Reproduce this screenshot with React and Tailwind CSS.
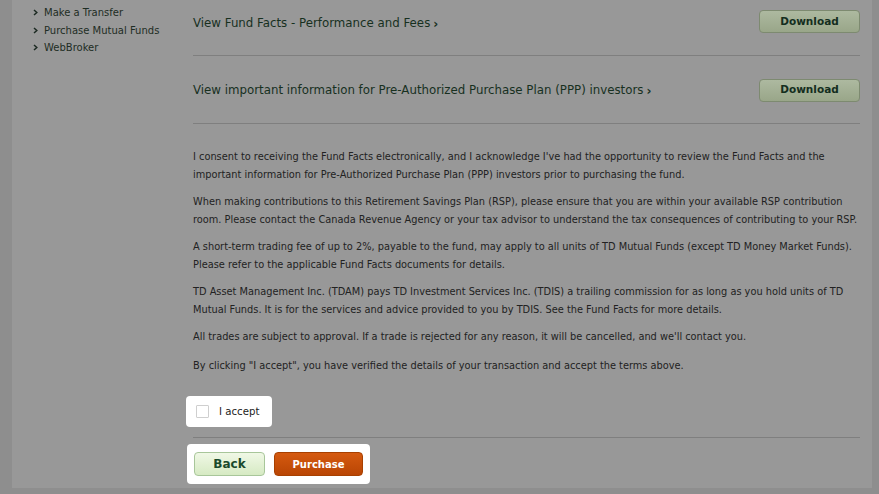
import React from 'react';

const font = "font-['DejaVu_Sans',Verdana,sans-serif]";

const Chevron = () => (
  <svg width="5" height="7" viewBox="0 0 5 7" className="shrink-0">
    <polyline points="1,1 3.8,3.5 1,6" fill="none" stroke="#1c2a22" strokeWidth="1.5" />
  </svg>
);

const DownloadButton = () => (
  <button className="w-[101px] h-[23px] rounded-[4px] border border-[#7d8a70] bg-gradient-to-b from-[#adb9a0] to-[#99a689] text-[10.5px] font-bold text-[#142e1e] shrink-0">
    Download
  </button>
);

const LinkRow = ({ label, first }) => (
  <div className={`flex justify-between border-b border-[#7f7f7f] ${first ? 'h-[56px] pb-[22px] items-end' : 'h-[68px] items-center pt-[1px]'}`}>
    <a className="text-[11.8px] text-[#17301f] flex items-center gap-[3px] pt-[2px]">
      {label}
      <span className="font-bold text-[12px]">›</span>
    </a>
    <DownloadButton />
  </div>
);

const paragraphs = [
  "I consent to receiving the Fund Facts electronically, and I acknowledge I've had the opportunity to review the Fund Facts and the important information for Pre-Authorized Purchase Plan (PPP) investors prior to purchasing the fund.",
  "When making contributions to this Retirement Savings Plan (RSP), please ensure that you are within your available RSP contribution room. Please contact the Canada Revenue Agency or your tax advisor to understand the tax consequences of contributing to your RSP.",
  "A short-term trading fee of up to 2%, payable to the fund, may apply to all units of TD Mutual Funds (except TD Money Market Funds). Please refer to the applicable Fund Facts documents for details.",
  "TD Asset Management Inc. (TDAM) pays TD Investment Services Inc. (TDIS) a trailing commission for as long as you hold units of TD Mutual Funds. It is for the services and advice provided to you by TDIS. See the Fund Facts for more details.",
  "All trades are subject to approval. If a trade is rejected for any reason, it will be cancelled, and we'll contact you.",
  'By clicking "I accept", you have verified the details of your transaction and accept the terms above.',
];

export default function App() {
  return (
    <div className={`min-h-screen bg-[#8e8e8e] ${font}`}>
      <div className="ml-[12px] mr-[7px] h-[488px] bg-[#989898] flex">
        {/* Sidebar */}
        <div className="w-[181px] shrink-0 pl-[21px] pt-[4px]">
          {['Make a Transfer', 'Purchase Mutual Funds', 'WebBroker'].map((item) => (
            <div key={item} className="flex items-center gap-[6px] h-[17.5px] text-[10px] text-[#1e2d24]">
              <Chevron />
              <span>{item}</span>
            </div>
          ))}
        </div>

        {/* Main */}
        <div className="flex-1 pr-[12px]">
          <LinkRow label="View Fund Facts - Performance and Fees" first />
          <LinkRow label="View important information for Pre-Authorized Purchase Plan (PPP) investors" />

          <div className="pt-[24px] text-[9.8px] leading-[18px] text-[#222]">
            {paragraphs.map((p, i) => (
              <p key={i} className={i === 4 ? 'mb-[11px]' : 'mb-[9px]'}>{p}</p>
            ))}
          </div>

          <div className="mt-[21px] -ml-[7px] w-[86px] h-[31px] bg-white rounded-[4px] flex items-center pl-[10px] gap-[10px]">
            <span className="w-[13px] h-[13px] border border-[#cfcfcf] rounded-[1px] bg-white shrink-0" />
            <span className="text-[10.2px] text-[#222]">I accept</span>
          </div>

          <div className="mt-[10px] border-b border-[#7f7f7f]" />

          <div className="mt-[6px] -ml-[6px] w-[183px] h-[40px] bg-white rounded-[4px] flex items-center pl-[7px] gap-[9px]">
            <button className="w-[71px] h-[24px] rounded-[4px] border border-[#a8c69a] bg-gradient-to-b from-[#f0f8e6] to-[#d6eac3] text-[12px] font-bold text-[#1a4a2c]">
              Back
            </button>
            <button className="w-[89px] h-[24px] rounded-[4px] border border-[#a84000] bg-gradient-to-b from-[#d55a10] to-[#b94504] text-[10px] font-bold text-white">
              Purchase
            </button>
          </div>
        </div>
      </div>
    </div>
  );
}
